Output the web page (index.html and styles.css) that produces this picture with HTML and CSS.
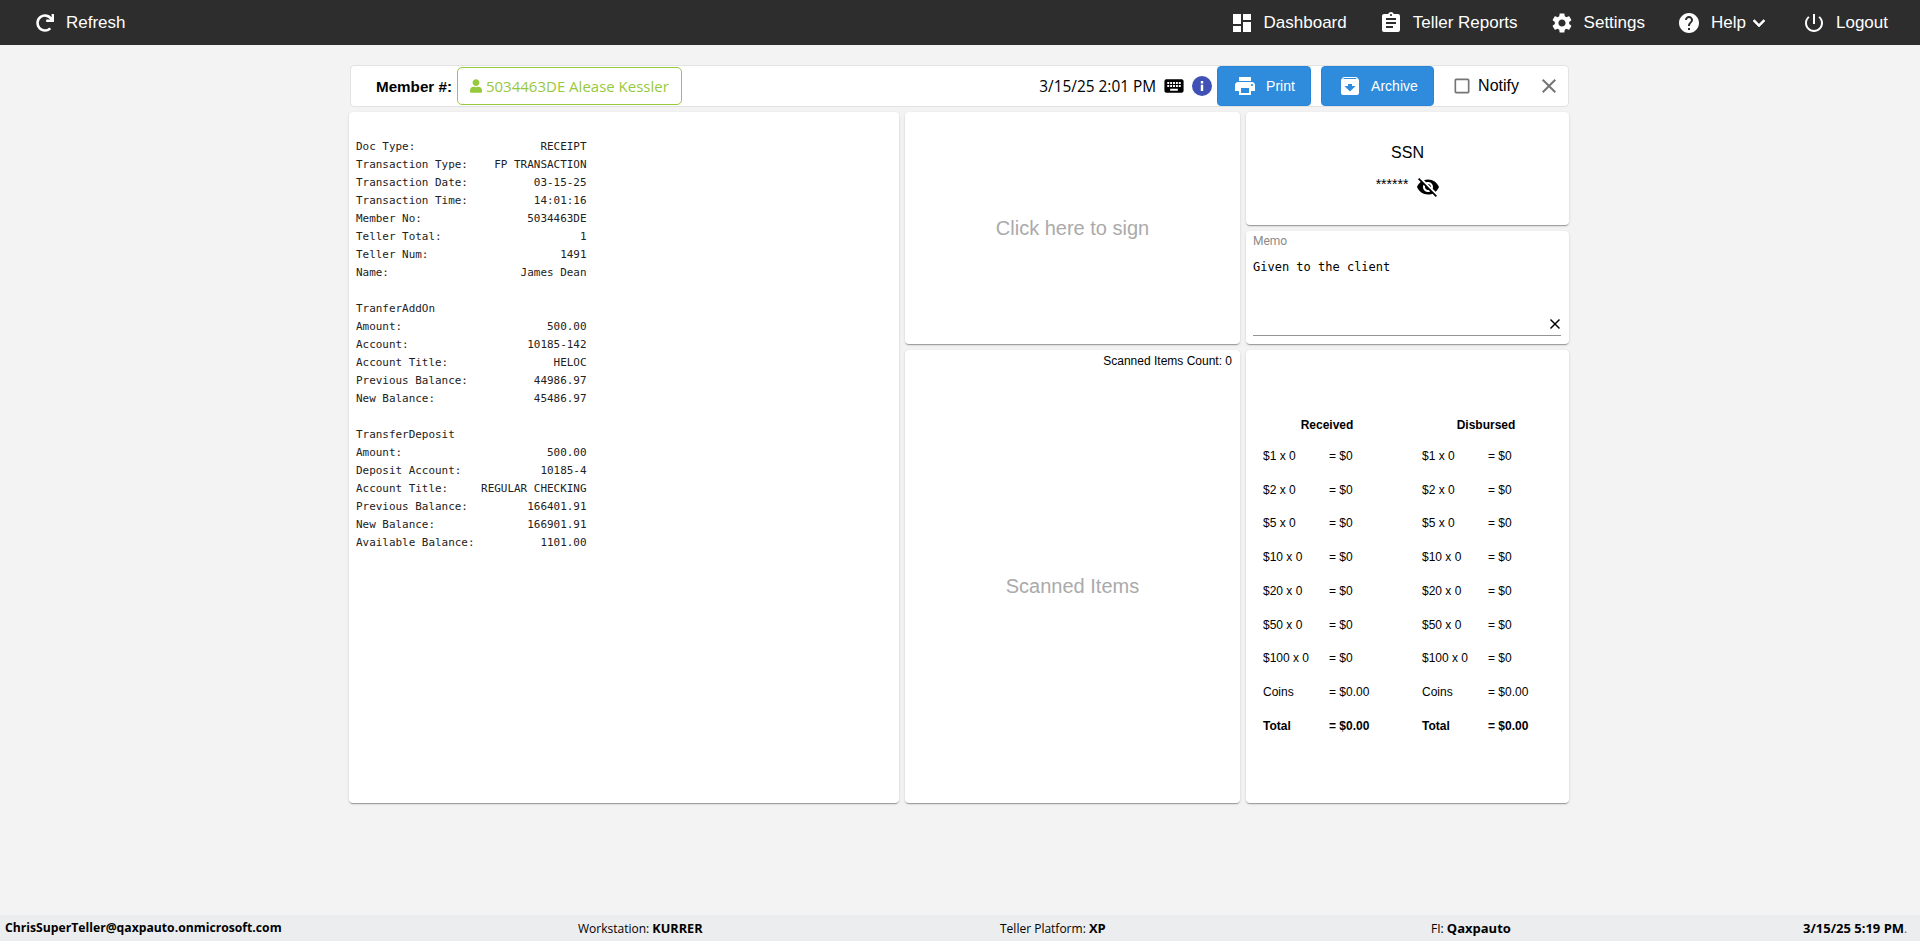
FILE: index.html
```html
<!DOCTYPE html>
<html lang="en">
<head>
<meta charset="utf-8">
<title>Receipt</title>
<link rel="stylesheet" href="styles.css">
</head>
<body>
<header class="nav">
  <a class="nav-item refresh"><svg class="ico-refresh" viewBox="0 0 512 512"><path d="M500.33 0h-47.41a12 12 0 0 0-12 12.57l4 82.76A247.42 247.42 0 0 0 256 8C119.34 8 8.36 119.33 8 256c-.36 137.09 110.77 248 248 248a247.92 247.92 0 0 0 166.18-63.91 12 12 0 0 0 .48-17.43l-34-34a12 12 0 0 0-16.38-.55A176 176 0 1 1 402.1 157.8l-101.53-4.87a12 12 0 0 0-12.57 12v47.41a12 12 0 0 0 12 12h200.33a12 12 0 0 0 12-12V12a12 12 0 0 0-12-12z"/></svg>Refresh</a>
  <nav class="nav-right">
    <a class="nav-item"><svg class="ico24" viewBox="0 0 24 24"><path d="M3 13h8V3H3v10zm0 8h8v-6H3v6zm10 0h8V11h-8v10zm0-18v6h8V3h-8z"/></svg>Dashboard</a>
    <a class="nav-item"><svg class="ico24" viewBox="0 0 24 24"><path d="M19 3h-4.18C14.4 1.84 13.3 1 12 1c-1.3 0-2.4.84-2.82 2H5c-1.1 0-2 .9-2 2v14c0 1.1.9 2 2 2h14c1.1 0 2-.9 2-2V5c0-1.1-.9-2-2-2zm-7 0c.55 0 1 .45 1 1s-.45 1-1 1-1-.45-1-1 .45-1 1-1zm2 14H7v-2h7v2zm3-4H7v-2h10v2zm0-4H7V7h10v2z"/></svg>Teller Reports</a>
    <a class="nav-item"><svg class="ico24" viewBox="0 0 24 24"><path d="M19.14 12.94c.04-.3.06-.61.06-.94 0-.32-.02-.64-.07-.94l2.03-1.58c.18-.14.23-.41.12-.61l-1.92-3.32c-.12-.22-.37-.29-.59-.22l-2.39.96c-.5-.38-1.03-.7-1.62-.94l-.36-2.54c-.04-.24-.24-.41-.48-.41h-3.84c-.24 0-.43.17-.47.41l-.36 2.54c-.59.24-1.13.57-1.62.94l-2.39-.96c-.22-.08-.47 0-.59.22L2.74 8.87c-.12.21-.08.47.12.61l2.03 1.58c-.05.3-.09.63-.09.94s.02.64.07.94l-2.03 1.58c-.18.14-.23.41-.12.61l1.92 3.32c.12.22.37.29.59.22l2.39-.96c.5.38 1.03.7 1.62.94l.36 2.54c.05.24.24.41.48.41h3.84c.24 0 .44-.17.47-.41l.36-2.54c.59-.24 1.13-.56 1.62-.94l2.39.96c.22.08.47 0 .59-.22l1.92-3.32c.12-.22.07-.47-.12-.61l-2.01-1.58zM12 15.6c-1.98 0-3.6-1.62-3.6-3.6s1.62-3.6 3.6-3.6 3.6 1.62 3.6 3.6-1.62 3.6-3.6 3.6z"/></svg>Settings</a>
    <a class="nav-item"><svg class="ico24" viewBox="0 0 24 24"><path d="M12 2C6.48 2 2 6.48 2 12s4.48 10 10 10 10-4.48 10-10S17.52 2 12 2zm1 17h-2v-2h2v2zm2.07-7.75l-.9.92C13.45 12.9 13 13.5 13 15h-2v-.5c0-1.1.45-2.1 1.17-2.83l1.24-1.26c.37-.36.59-.86.59-1.41 0-1.1-.9-2-2-2s-2 .9-2 2H8c0-2.21 1.79-4 4-4s4 1.79 4 4c0 .88-.36 1.68-.93 2.25z"/></svg>Help<svg class="ico-chev" viewBox="0 0 24 24"><path d="M16.59 8.59L12 13.17 7.41 8.59 6 10l6 6 6-6z"/></svg></a>
    <a class="nav-item nav-logout"><svg class="ico24" viewBox="0 0 24 24"><path d="M13 3h-2v10h2V3zm4.83 2.17l-1.42 1.42C17.99 7.86 19 9.81 19 12c0 3.87-3.13 7-7 7s-7-3.13-7-7c0-2.19 1.01-4.14 2.58-5.42L6.17 5.17C4.23 6.82 3 9.26 3 12c0 4.97 4.03 9 9 9s9-4.03 9-9c0-2.74-1.23-5.18-3.17-6.83z"/></svg>Logout</a>
  </nav>
</header>

<main class="main">
  <section class="toolbar">
    <span class="member-label">Member #:</span>
    <span class="member-pill"><svg class="ico-user" viewBox="0 0 448 512"><path d="M224 256c70.700 0 128-57.300 128-128S294.700 0 224 0 96 57.300 96 128s57.300 128 128 128zm89.600 32h-16.700c-22.200 10.200-46.900 16-72.900 16s-50.600-5.800-72.900-16h-16.700C60.200 288 0 348.200 0 422.400V464c0 26.500 21.500 48 48 48h352c26.500 0 48-21.500 48-48v-41.600c0-74.200-60.200-134.400-134.400-134.400z"/></svg>5034463DE Alease Kessler</span>
    <span class="datetime">3/15/25 2:01 PM</span>
    <svg class="ico-kbd" viewBox="0 0 24 24"><path d="M20 5H4c-1.100 0-1.990.9-1.990 2L2 17c0 1.100.9 2 2 2h16c1.100 0 2-.9 2-2V7c0-1.100-.9-2-2-2zm-9 3h2v2h-2V8zm0 3h2v2h-2v-2zM8 8h2v2H8V8zm0 3h2v2H8v-2zm-1 2H5v-2h2v2zm0-3H5V8h2v2zm9 7H8v-2h8v2zm0-4h-2v-2h2v2zm0-3h-2V8h2v2zm3 3h-2v-2h2v2zm0-3h-2V8h2v2z" transform="translate(-1.800 -1.900) scale(1.150)"/></svg>
    <svg class="ico-info" viewBox="0 0 20 20"><circle cx="10" cy="10" r="10"/><path class="info-i" d="M8.800 8.800h2.400v6.200H8.800zM8.800 5h2.400v2.400H8.800z"/></svg>
    <button class="btn btn-print" type="button"><svg class="ico-btn" viewBox="0 0 24 24"><path d="M19 8H5c-1.660 0-3 1.340-3 3v6h4v4h12v-4h4v-6c0-1.660-1.340-3-3-3zm-3 11H8v-5h8v5zm3-7c-.55 0-1-.45-1-1s.45-1 1-1 1 .45 1 1-.45 1-1 1zm-1-9H6v4h12V3z"/></svg>Print</button>
    <button class="btn btn-archive" type="button"><svg class="ico-btn" viewBox="0 0 24 24"><path d="M20.540 5.230l-1.390-1.680C18.880 3.210 18.470 3 18 3H6c-.47 0-.88.21-1.160.55L3.460 5.230C3.170 5.570 3 6.020 3 6.500V19c0 1.100.9 2 2 2h14c1.100 0 2-.9 2-2V6.500c0-.48-.17-.93-.46-1.270zM12 17.500L6.500 12H10v-2h4v2h3.500L12 17.500zM5.120 5l.81-1h12l.94 1H5.120z"/></svg>Archive</button>
    <svg class="ico-check" viewBox="0 0 24 24"><path d="M19 5v14H5V5h14m0-2H5c-1.100 0-2 .9-2 2v14c0 1.100.9 2 2 2h14c1.100 0 2-.9 2-2V5c0-1.100-.9-2-2-2z"/></svg>
    <span class="notify">Notify</span>
    <svg class="ico-close" viewBox="5 5 14 14"><path d="M19 6.410L17.590 5 12 10.590 6.410 5 5 6.410 10.590 12 5 17.590 6.410 19 12 13.410 17.590 19 19 17.590 13.410 12z"/></svg>
  </section>

  <section class="grid">
    <article class="card receipt">
<pre class="receipt-text">Doc Type:                   RECEIPT
Transaction Type:    FP TRANSACTION
Transaction Date:          03-15-25
Transaction Time:          14:01:16
Member No:                5034463DE
Teller Total:                     1
Teller Num:                    1491
Name:                    James Dean

TranferAddOn
Amount:                      500.00
Account:                  10185-142
Account Title:                HELOC
Previous Balance:          44986.97
New Balance:               45486.97

TransferDeposit
Amount:                      500.00
Deposit Account:            10185-4
Account Title:     REGULAR CHECKING
Previous Balance:         166401.91
New Balance:              166901.91
Available Balance:          1101.00</pre>
    </article>

    <article class="card sign">Click here to sign</article>

    <div class="right-top">
      <article class="card ssn">
        <div class="ssn-title">SSN</div>
        <div class="ssn-row"><span class="ssn-stars">******</span><svg class="ico-eye" viewBox="0 0 24 24"><path d="M12 7c2.760 0 5 2.240 5 5 0 .65-.13 1.260-.36 1.830l2.920 2.920c1.510-1.260 2.700-2.890 3.430-4.750-1.730-4.390-6-7.500-11-7.500-1.400 0-2.740.25-3.980.7l2.160 2.160C10.740 7.130 11.350 7 12 7zM2 4.270l2.280 2.280.46.46C3.080 8.300 1.780 10.020 1 12c1.730 4.390 6 7.500 11 7.500 1.550 0 3.030-.3 4.380-.84l.42.42L19.730 22 21 20.730 3.270 3 2 4.270zM7.530 9.800l1.550 1.550c-.05.21-.08.43-.08.65 0 1.660 1.340 3 3 3 .22 0 .44-.03.65-.08l1.550 1.550c-.67.33-1.410.53-2.200.53-2.760 0-5-2.240-5-5 0-.79.2-1.530.53-2.200zm4.310-.78l3.150 3.150.02-.16c0-1.660-1.340-3-3-3l-.17.01z"/></svg></div>
      </article>
      <article class="card memo">
        <div class="memo-label">Memo</div>
        <div class="memo-field">
          <div class="memo-text">Given to the client</div>
          <svg class="ico-memo-x" viewBox="5 5 14 14"><path d="M19 6.410L17.590 5 12 10.590 6.410 5 5 6.410 10.590 12 5 17.590 6.410 19 12 13.410 17.590 19 19 17.590 13.410 12z"/></svg>
        </div>
      </article>
    </div>

    <article class="card scanned">
      <div class="scan-count">Scanned Items Count: 0</div>
      <div class="scan-empty">Scanned Items</div>
    </article>

    <article class="card counts">
      <div class="count-grid">
        <div class="count-head">Received</div><div class="count-head">Disbursed</div>
        <span>$1 x 0</span><span>= $0</span><span>$1 x 0</span><span>= $0</span>
        <span>$2 x 0</span><span>= $0</span><span>$2 x 0</span><span>= $0</span>
        <span>$5 x 0</span><span>= $0</span><span>$5 x 0</span><span>= $0</span>
        <span>$10 x 0</span><span>= $0</span><span>$10 x 0</span><span>= $0</span>
        <span>$20 x 0</span><span>= $0</span><span>$20 x 0</span><span>= $0</span>
        <span>$50 x 0</span><span>= $0</span><span>$50 x 0</span><span>= $0</span>
        <span>$100 x 0</span><span>= $0</span><span>$100 x 0</span><span>= $0</span>
        <span>Coins</span><span>= $0.00</span><span>Coins</span><span>= $0.00</span>
        <b>Total</b><b>= $0.00</b><b>Total</b><b>= $0.00</b>
      </div>
    </article>
  </section>
</main>

<footer class="footer">
  <b class="foot-user">ChrisSuperTeller@qaxpauto.onmicrosoft.com</b>
  <span>Workstation: <b class="foot-ws">KURRER</b></span>
  <span>Teller Platform: <b class="foot-tp">XP</b></span>
  <span>FI: <b class="foot-fi">Qaxpauto</b></span>
  <span><b class="foot-date">3/15/25 5:19 PM</b><span class="foot-dot">.</span></span>
</footer>
</body>
</html>
```

FILE: styles.css
```css
* { box-sizing: border-box; }
html, body { margin: 0; height: 941px; overflow: hidden; }
body {
  display: flex;
  flex-direction: column;
  background: #f3f3f3;
  color: #000;
  font-family: "Liberation Sans", Arial, sans-serif;
}
svg { display: block; flex: none; fill: currentColor; }

/* top bar */
.nav {
  height: 45px;
  flex: none;
  display: flex;
  align-items: center;
  justify-content: space-between;
  background: #2d2d2d;
  color: #fff;
  font-size: 17px;
  padding: 0 32px 0 36px;
}
.nav-right { display: flex; align-items: center; gap: 33px; }
.nav-item { display: flex; align-items: center; gap: 10px; white-space: nowrap; }
.nav-logout { margin-left: 2px; }
.refresh { gap: 12px; }
.ico-refresh { width: 18px; height: 18px; }
.ico24 { width: 24px; height: 24px; margin-left: -1px; }
.ico-chev { width: 24px; height: 24px; margin: 1px -3px 0 -9px; stroke: currentColor; stroke-width: .6; }

/* content */
.main {
  flex: 1;
  margin: 20px 351px 0 349px;
  display: flex;
  flex-direction: column;
  gap: 5px;
}
.toolbar {
  height: 42px;
  flex: none;
  margin-left: 1px;
  background: #fff;
  border: 1px solid #e2e2e2;
  border-radius: 4px;
  display: flex;
  align-items: center;
  padding-left: 25px;
}
.member-label { font-size: 15.2px; font-weight: 700; margin-right: 5px; }
.member-pill {
  height: 38px;
  width: 225px;
  border: 1px solid #97c93d;
  border-radius: 5px;
  color: #97c93d;
  display: flex;
  align-items: center;
  gap: 4px;
  padding-left: 12px;
  font: 15px "Open Sans", sans-serif;
}
.ico-user { width: 12px; height: 14px; }
.datetime { margin-left: auto; padding-top: 1px; font: 15.4px "Open Sans", sans-serif; }
.ico-kbd { width: 20px; height: 20px; margin-left: 8px; }
.ico-info { width: 20px; height: 20px; margin-left: 8px; color: #3f51b5; }
.info-i { fill: #fff; }
.btn {
  height: 40px;
  border: 1px solid #2b85d6;
  border-radius: 4px;
  background: #2f8cdc;
  color: #fff;
  font: 14px "Liberation Sans", Arial, sans-serif;
  display: flex;
  align-items: center;
  gap: 11px;
  padding: 0;
}
.btn-print { width: 94px; margin-left: 5px; padding-left: 15px; }
.btn-archive { width: 113px; margin-left: 10px; padding-left: 16px; }
.ico-btn { width: 24px; height: 24px; margin-right: -2px; }
.ico-check { width: 20px; height: 20px; margin-left: 18px; color: #757575; }
.notify { font-size: 16px; margin-left: 6px; }
.ico-close { width: 14px; height: 14px; margin-left: 23px; margin-right: 12px; color: #757575; }

.grid {
  display: grid;
  grid-template-columns: 550px 335px 323px;
  grid-template-rows: 232px 453px;
  gap: 6px;
}
.card {
  background: #fff;
  border-radius: 4px;
  box-shadow: 0 2px 1px -1px rgba(0,0,0,.2), 0 1px 1px 0 rgba(0,0,0,.14), 0 1px 3px 0 rgba(0,0,0,.12);
}
.receipt { grid-row: 1 / 3; padding: 26px 0 0 7px; }
.receipt-text {
  margin: 0;
  font: 10.95px/18px "DejaVu Sans Mono", monospace;
  color: #222;
}
.sign {
  display: flex;
  align-items: center;
  justify-content: center;
  font-size: 20px;
  color: #aaa;
}
.right-top { display: flex; flex-direction: column; gap: 6px; }
.ssn { height: 113px; padding-top: 29px; text-align: center; }
.ssn-title { font-size: 16px; line-height: 24px; }
.ssn-row { display: flex; justify-content: center; align-items: center; gap: 8px; margin-top: 10px; padding-left: 1px; }
.ssn-stars { font-size: 14px; line-height: 24px; margin-top: -6px; }
.ico-eye { width: 24px; height: 24px; }
.memo { height: 113px; padding: 2px 8px 0 7px; }
.memo-label { font: 12px/16px Roboto, sans-serif; color: #8a8a8a; }
.memo-field {
  height: 84px;
  border-bottom: 1px solid #949494;
  margin-top: 3px;
  padding-top: 7px;
  display: flex;
  flex-direction: column;
}
.memo-text { font: 12px/16px "DejaVu Sans Mono", monospace; }
.ico-memo-x { width: 10px; height: 10px; margin: auto 1px 6px auto; }
.scanned { display: flex; flex-direction: column; }
.scan-count { font-size: 12px; line-height: 18px; text-align: right; padding: 2px 8px 0 0; height: 20px; flex: none; }
.scan-empty { flex: 1; display: flex; align-items: center; justify-content: center; font-size: 20px; color: #aaa; }
.counts { padding: 59px 0 0 17px; font-size: 12px; }
.count-grid {
  display: grid;
  grid-template-columns: 66px 93px 66px 93px;
  grid-template-rows: 30px;
  grid-auto-rows: 33.75px;
  align-items: center;
  line-height: 14px;
}
.count-head {
  grid-column: span 2;
  height: 30px;
  padding: 9px 31px 0 0;
  font-weight: 700;
  text-align: center;
}

/* status bar */
.footer {
  height: 26px;
  flex: none;
  background: #ecedef;
  font: 12px/26px "Open Sans", sans-serif;
  display: grid;
  grid-template-columns: 573px 422px 431px 372px 1fr;
  padding-left: 5px;
  white-space: nowrap;
}
.foot-user { font-size: 12.2px; }
.foot-ws { font-size: 12.7px; }
.foot-tp, .foot-fi, .foot-date { font-size: 13px; }
.foot-dot { color: #666; }
```
